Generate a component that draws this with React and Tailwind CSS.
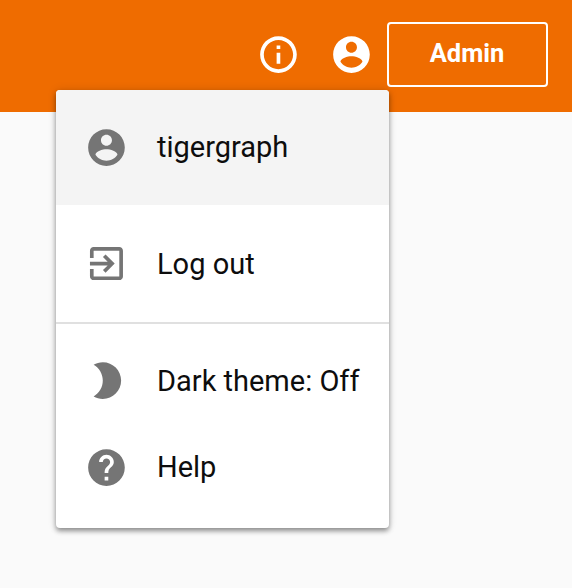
const PATHS = {
  info: "M11 7h2v2h-2V7zm0 4h2v6h-2v-6zm1-9C6.48 2 2 6.48 2 12s4.48 10 10 10 10-4.48 10-10S17.52 2 12 2zm0 18c-4.41 0-8-3.59-8-8s3.59-8 8-8 8 3.59 8 8-3.59 8-8 8z",
  account: "M12 2C6.48 2 2 6.48 2 12s4.48 10 10 10 10-4.48 10-10S17.52 2 12 2zm0 3c1.66 0 3 1.34 3 3s-1.34 3-3 3-3-1.34-3-3 1.34-3 3-3zm0 14.2c-2.5 0-4.71-1.28-6-3.22.03-1.99 4-3.08 6-3.08 1.99 0 5.97 1.09 6 3.08-1.29 1.94-3.5 3.22-6 3.22z",
  logout: "M10.09 15.59L11.5 17l5-5-5-5-1.41 1.41L12.67 11H3v2h9.67l-2.58 2.59zM19 3H5c-1.11 0-2 .9-2 2v4h2V5h14v14H5v-4H3v4c0 1.1.89 2 2 2h14c1.1 0 2-.9 2-2V5c0-1.1-.9-2-2-2z",
  moon: "M10 2c-1.82 0-3.53.5-5 1.35C7.99 5.08 10 8.3 10 12s-2.01 6.92-5 8.65C6.47 21.5 8.18 22 10 22c5.52 0 10-4.48 10-10S15.52 2 10 2z",
  help: "M12 2C6.48 2 2 6.48 2 12s4.48 10 10 10 10-4.48 10-10S17.52 2 12 2zm1 17h-2v-2h2v2zm2.07-7.75l-.9.92C13.45 12.9 13 13.5 13 15h-2v-.5c0-1.1.45-2.1 1.17-2.83l1.24-1.26c.37-.36.59-.86.59-1.41 0-1.1-.9-2-2-2s-2 .9-2 2H8c0-2.21 1.79-4 4-4s4 1.79 4 4c0 .88-.36 1.68-.93 2.25z",
};

function Icon({ name }) {
  return (
    <svg viewBox="-0.25 0.25 24 24" fill="currentColor" className="size-[44px] shrink-0">
      <path d={PATHS[name]} />
    </svg>
  );
}

function MenuItem({ icon, label, className }) {
  return (
    <button className={`flex w-full items-center gap-[29px] pl-[28px] text-left ${className}`}>
      <span className="text-[#757575]">
        <Icon name={icon} />
      </span>
      <span className="whitespace-nowrap">{label}</span>
    </button>
  );
}

export default function App() {
  return (
    <div className="relative h-[588px] w-[572px] overflow-hidden bg-[#fafafa] font-[Roboto,sans-serif]">
      <header className="flex h-[112px] items-start justify-end bg-[#ef6c00] pr-6 text-white">
        <div className="flex gap-[29px] pt-[33px]">
          <Icon name="info" />
          <Icon name="account" />
        </div>
        <button className="ml-[14px] mt-[22px] flex h-[65px] w-[161px] items-center justify-center rounded-[4px] border-2 border-white pb-[2px] pr-px text-[25.5px] font-bold">
          Admin
        </button>
      </header>
      <div className="absolute left-[56px] top-[90px] h-[438px] w-[333px] overflow-hidden rounded-[4px] bg-white text-[29px] leading-none text-[#0d0d0d] shadow-[0_3px_5px_rgba(0,0,0,0.4),0_0_10px_rgba(0,0,0,0.12)]">
        <MenuItem icon="account" label="tigergraph" className="h-[115px] bg-[#f4f4f4]" />
        <MenuItem icon="logout" label="Log out" className="h-[117px] pt-px" />
        <div className="border-t-2 border-[#e0e0e0] pt-[14px]">
          <MenuItem icon="moon" label="Dark theme: Off" className="h-[86px]" />
          <MenuItem icon="help" label="Help" className="h-[87px]" />
        </div>
      </div>
    </div>
  );
}
